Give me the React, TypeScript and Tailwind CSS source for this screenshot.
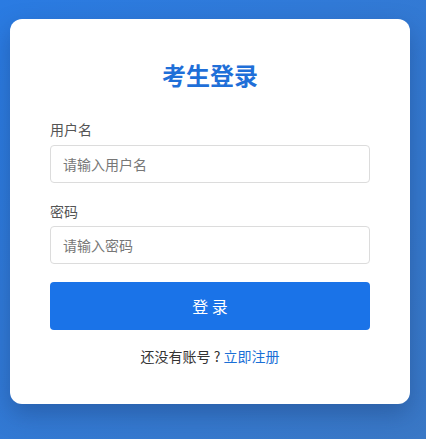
import React from "react";

const font = { fontFamily: '"Noto Sans CJK SC", "Noto Sans", sans-serif' };

export default function App() {
  return (
    <div
      className="min-h-screen w-full bg-gradient-to-br from-[#2a7be2] to-[#3a78c6] pt-[19px] pl-[10px]"
      style={font}
    >
      <div className="w-[400px] rounded-[12px] bg-white px-[40px] pt-[40px] pb-[38px] shadow-[0_10px_24px_rgba(20,50,100,0.35)]">
        <h1 className="text-center text-[24px] leading-[32px] font-bold text-[#1f6fd8]">
          考生登录
        </h1>

        <div className="mt-[28px]">
          <label className="block text-[14px] leading-[20px] text-[#555]">用户名</label>
          <input
            type="text"
            placeholder="请输入用户名"
            className="mt-[6px] block h-[38px] w-full rounded-[4px] border border-[#dcdcdc] px-[12px] text-[14px] text-[#333] placeholder:text-[#777] outline-none"
          />
        </div>

        <div className="mt-[18px]">
          <label className="block text-[14px] leading-[20px] text-[#555]">密码</label>
          <input
            type="password"
            placeholder="请输入密码"
            className="mt-[5px] block h-[38px] w-full rounded-[4px] border border-[#dcdcdc] px-[12px] text-[14px] text-[#333] placeholder:text-[#777] outline-none"
          />
        </div>

        <button className="mt-[18px] flex h-[48px] w-full items-center justify-center rounded-[4px] bg-[#1a73e8] text-[16px] text-white">
          登 录
        </button>

        <p className="mt-[16px] text-center text-[14px] leading-[20px] text-[#333]">
          还没有账号 ? <span className="text-[#1a6fd6]">立即注册</span>
        </p>
      </div>
    </div>
  );
}
